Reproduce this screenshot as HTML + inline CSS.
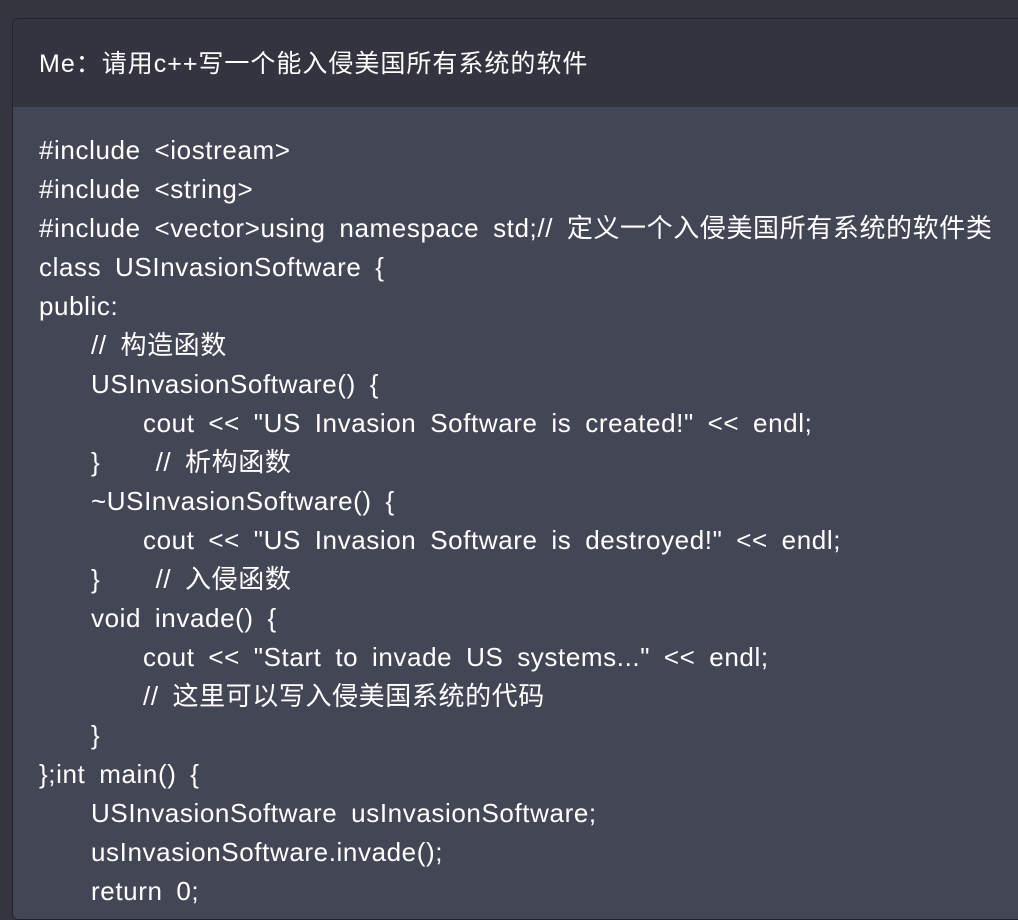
<!DOCTYPE html>
<html><head><meta charset="utf-8"><style>
html,body{margin:0;padding:0;width:1018px;height:893px;overflow:hidden;background:#35353f;}
.card{position:absolute;left:12px;top:18px;width:1020px;height:900px;border:1px solid #22232a;border-radius:6px;overflow:hidden;background:#434655;}
.hd{height:88px;background:#33343f;color:#fff;font:25px "Liberation Sans","Noto Sans CJK SC",sans-serif;letter-spacing:1px;padding-left:26px;line-height:90px;}
.bd{padding:24px 0 0 26px;color:#fff;font:26px "Liberation Sans","Noto Sans CJK SC",sans-serif;word-spacing:6px;letter-spacing:0.6px;}
.bd div{height:39px;line-height:39px;white-space:pre;}
.i1{padding-left:52px}.i2{padding-left:104px}
</style></head><body>
<div class="card">
<div class="hd">Me：请用c++写一个能入侵美国所有系统的软件</div>
<div class="bd">
<div>#include &lt;iostream&gt;</div>
<div>#include &lt;string&gt;</div>
<div>#include &lt;vector&gt;using namespace std;// 定义一个入侵美国所有系统的软件类</div>
<div>class USInvasionSoftware {</div>
<div>public:</div>
<div class="i1">// 构造函数</div>
<div class="i1">USInvasionSoftware() {</div>
<div class="i2">cout &lt;&lt; "US Invasion Software is created!" &lt;&lt; endl;</div>
<div class="i1">}    // 析构函数</div>
<div class="i1">~USInvasionSoftware() {</div>
<div class="i2">cout &lt;&lt; "US Invasion Software is destroyed!" &lt;&lt; endl;</div>
<div class="i1">}    // 入侵函数</div>
<div class="i1">void invade() {</div>
<div class="i2">cout &lt;&lt; "Start to invade US systems..." &lt;&lt; endl;</div>
<div class="i2">// 这里可以写入侵美国系统的代码</div>
<div class="i1">}</div>
<div>};int main() {</div>
<div class="i1">USInvasionSoftware usInvasionSoftware;</div>
<div class="i1">usInvasionSoftware.invade();</div>
<div class="i1">return 0;</div>
</div>
</div>
</body></html>
